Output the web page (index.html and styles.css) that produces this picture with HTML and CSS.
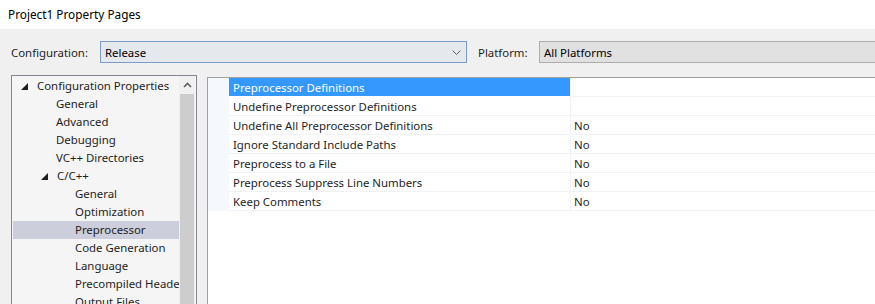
FILE: index.html
```html
<!DOCTYPE html>
<html lang="en">

<head>
    <meta charset="UTF-8">
    <meta name="viewport" content="width=device-width, initial-scale=1.0">
    <title>Project1 Property Pages</title>
    <link rel="stylesheet" href="styles.css">
</head>

<body>
    <div class="titlebar">Project1 Property Pages</div>

    <div class="dialog">
        <!-- 구성 / 플랫폼 선택 -->
        <div class="config-row">
            <span class="label-config">Configuration:</span>
            <div class="combo combo-config">
                <span>Release</span>
                <svg class="combo-arrow" width="9" height="5" viewBox="0 0 9 5">
                    <path d="M0.5 0.5 L4.5 4.5 L8.5 0.5" fill="none" stroke="#606060" stroke-width="1" />
                </svg>
            </div>
            <span class="label-platform">Platform:</span>
            <div class="combo combo-platform">
                <span>All Platforms</span>
            </div>
        </div>

        <div class="main">
            <!-- 트리 -->
            <div class="tree">
                <ul class="tree-list">
                    <li class="lv0"><svg class="twisty" width="7" height="7" viewBox="0 0 7 7"><polygon points="0,7 7,7 7,0" fill="#1e1e1e" /></svg>Configuration Properties</li>
                    <li class="lv1">General</li>
                    <li class="lv1">Advanced</li>
                    <li class="lv1">Debugging</li>
                    <li class="lv1">VC++ Directories</li>
                    <li class="lv1 has-twisty"><svg class="twisty" width="7" height="7" viewBox="0 0 7 7"><polygon points="0,7 7,7 7,0" fill="#1e1e1e" /></svg>C/C++</li>
                    <li class="lv2">General</li>
                    <li class="lv2">Optimization</li>
                    <li class="lv2 on">Preprocessor</li>
                    <li class="lv2">Code Generation</li>
                    <li class="lv2">Language</li>
                    <li class="lv2">Precompiled Headers</li>
                    <li class="lv2">Output Files</li>
                </ul>
                <div class="scrollbar">
                    <div class="scroll-up">
                        <svg width="9" height="6" viewBox="0 0 9 6">
                            <path d="M1 5 L4.5 1.5 L8 5" fill="none" stroke="#606060" stroke-width="1.6" />
                        </svg>
                    </div>
                    <div class="scroll-thumb"></div>
                </div>
            </div>

            <!-- 속성 그리드 -->
            <div class="grid">
                <div class="row on">
                    <div class="gutter"></div>
                    <div class="name">Preprocessor Definitions</div>
                    <div class="value"></div>
                </div>
                <div class="row">
                    <div class="gutter"></div>
                    <div class="name">Undefine Preprocessor Definitions</div>
                    <div class="value"></div>
                </div>
                <div class="row">
                    <div class="gutter"></div>
                    <div class="name">Undefine All Preprocessor Definitions</div>
                    <div class="value">No</div>
                </div>
                <div class="row">
                    <div class="gutter"></div>
                    <div class="name">Ignore Standard Include Paths</div>
                    <div class="value">No</div>
                </div>
                <div class="row">
                    <div class="gutter"></div>
                    <div class="name">Preprocess to a File</div>
                    <div class="value">No</div>
                </div>
                <div class="row">
                    <div class="gutter"></div>
                    <div class="name">Preprocess Suppress Line Numbers</div>
                    <div class="value">No</div>
                </div>
                <div class="row">
                    <div class="gutter"></div>
                    <div class="name">Keep Comments</div>
                    <div class="value">No</div>
                </div>
            </div>
        </div>
    </div>
</body>

</html>
```

FILE: styles.css
```css
html,
body {
    margin: 0;
    padding: 0;
    height: 100%;
    overflow: hidden;
}

body {
    font-family: "Noto Sans", "Noto Sans CJK KR", sans-serif;
    font-size: 11.4px;
    color: #1e1e1e;
    background: #f0f0f0;
}

ul,
li {
    list-style: none;
    margin: 0;
    padding: 0;
}

/* 타이틀 */
.titlebar {
    height: 29px;
    line-height: 28px;
    padding-left: 8px;
    background: #fff;
    color: #000;
    font-size: 11.8px;
}

.dialog {
    background: #f0f0f0;
}

/* 구성 줄 */
.config-row {
    display: flex;
    align-items: center;
    padding: 12px 0 0 11px;
    height: 22px;
}

.label-config {
    width: 89px;
}

.combo {
    box-sizing: border-box;
    height: 22px;
    display: flex;
    align-items: center;
    padding-left: 4px;
    white-space: nowrap;
    color: #000;
}

.combo-config {
    width: 367px;
    border: 1px solid #7a9cc6;
    background: #e5e9ee;
    position: relative;
}

.combo-arrow {
    position: absolute;
    right: 5px;
    top: 8px;
}

.label-platform {
    margin-left: 11px;
    width: 61px;
}

.combo-platform {
    flex: 1;
    border: 1px solid #adadad;
    border-right: none;
    background: #e1e1e1;
}

/* 본문 */
.main {
    display: flex;
    align-items: flex-start;
    margin-top: 12px;
    padding-left: 11px;
}

/* 트리 */
.tree {
    box-sizing: border-box;
    width: 186px;
    height: 240px;
    border: 1px solid #828790;
    border-bottom: none;
    background: #f5f5f5;
    display: flex;
}

.tree-list {
    flex: 1;
    padding-top: 1px;
    overflow: hidden;
}

.tree-list li {
    height: 18px;
    line-height: 18px;
    white-space: nowrap;
    overflow: hidden;
    margin-left: 1px;
    display: flex;
    align-items: center;
}

.tree-list li.lv0 {
    padding-left: 8px;
}

.tree-list li.lv1 {
    padding-left: 43px;
}

.tree-list li.lv1.has-twisty {
    padding-left: 28px;
}

.tree-list li.lv2 {
    padding-left: 62px;
}

.tree-list li.on {
    background: #cccedb;
}

.twisty {
    margin-right: 9px;
    flex-shrink: 0;
}

.scrollbar {
    width: 16px;
    margin-right: 1px;
    background: #f0f0f0;
    display: flex;
    flex-direction: column;
}

.scroll-up {
    height: 18px;
    display: flex;
    align-items: center;
    justify-content: center;
}

.scroll-thumb {
    flex: 1;
    margin: 0 1px;
    background: #cdcdcd;
}

/* 속성 그리드 */
.grid {
    flex: 1;
    margin-left: 10px;
    margin-top: 2px;
    height: 240px;
    border-top: 1px solid #a0a0a0;
    border-left: 1px solid #a0a0a0;
    background: #fff;
}

.row {
    display: flex;
    height: 19px;
    white-space: nowrap;
}

.gutter {
    width: 21px;
    background: #f5f8fd;
}

.name,
.value {
    box-sizing: border-box;
    padding-top: 1px;
    line-height: 17px;
    border-bottom: 1px solid #f0f2f5;
}

.name {
    width: 342px;
    padding-left: 4px;
    border-right: 1px solid #f0f2f5;
}

.value {
    flex: 1;
    padding-left: 3px;
}

.row.on .name {
    background: #3399ff;
    color: #fff;
    border-bottom: 1px solid #fff;
}
```
